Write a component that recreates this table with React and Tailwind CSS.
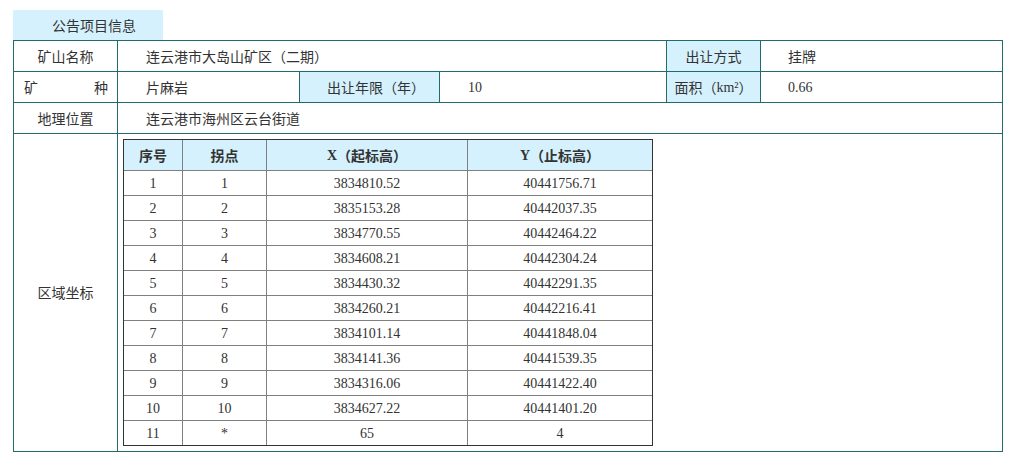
import React from 'react';

const cjk = { fontFamily: '"Noto Sans CJK SC", "Noto Sans", sans-serif' };
const num = { fontFamily: '"Liberation Serif", "Noto Sans CJK SC", serif' };

const points = [
  ['1', '1', '3834810.52', '40441756.71'],
  ['2', '2', '3835153.28', '40442037.35'],
  ['3', '3', '3834770.55', '40442464.22'],
  ['4', '4', '3834608.21', '40442304.24'],
  ['5', '5', '3834430.32', '40442291.35'],
  ['6', '6', '3834260.21', '40442216.41'],
  ['7', '7', '3834101.14', '40441848.04'],
  ['8', '8', '3834141.36', '40441539.35'],
  ['9', '9', '3834316.06', '40441422.40'],
  ['10', '10', '3834627.22', '40441401.20'],
  ['11', '*', '65', '4'],
];

const colW = ['w-[59px] border-r', 'w-[84px] border-r', 'w-[201px] border-r', 'w-[184px]'];

const CoordTable = () => (
  <div className="w-[530px] border border-[#333]">
    {/* header */}
    <div className="flex h-[31px] border-b border-[#808080] bg-[#d5f1fd] text-[14px] font-bold text-[#333]" style={cjk}>
      <div className={`${colW[0]} border-[#808080] flex items-center justify-center`}>序号</div>
      <div className={`${colW[1]} border-[#808080] flex items-center justify-center`}>拐点</div>
      <div className={`${colW[2]} border-[#808080] flex items-center justify-center`}>
        <span style={num}>X</span>（起标高）
      </div>
      <div className={`${colW[3]} border-[#808080] flex items-center justify-center`}>
        <span style={num}>Y</span>（止标高）
      </div>
    </div>
    {points.map((row, r) => (
      <div
        key={r}
        className={
          r < points.length - 1
            ? 'flex h-[25px] border-b border-[#808080] text-[14px] text-[#333]'
            : 'flex h-[24px] text-[14px] text-[#333]'
        }
        style={num}
      >
        {row.map((c, i) => (
          <div key={i} className={`${colW[i]} border-[#808080] flex items-center justify-center`}>
            {c}
          </div>
        ))}
      </div>
    ))}
  </div>
);

const App = () => {
  return (
    <div className="min-h-[462px] bg-white pl-[13px] pt-[10px] text-[14px] text-[#333]" style={cjk}>
      {/* tab */}
      <div className="w-[150px] h-[30px] bg-[#d5f1fd] flex items-center pl-[39px]">公告项目信息</div>

      <div className="w-[990px] border border-[#236b6b]">
        {/* row 1 */}
        <div className="flex h-[31px] border-b border-[#236b6b]">
          <div className="w-[104px] border-r border-[#236b6b] flex items-center justify-center">矿山名称</div>
          <div className="w-[549px] border-r border-[#236b6b] flex items-center pl-[28px]">连云港市大岛山矿区（二期）</div>
          <div className="w-[94px] border-r border-[#236b6b] bg-[#d5f1fd] flex items-center justify-center">出让方式</div>
          <div className="flex-1 flex items-center pl-[27px]">挂牌</div>
        </div>

        {/* row 2 */}
        <div className="flex h-[31px] border-b border-[#236b6b]">
          <div className="w-[104px] border-r border-[#236b6b] flex items-center justify-between pl-[10px] pr-[9px]">
            <span>矿</span>
            <span>种</span>
          </div>
          <div className="w-[182px] border-r border-[#236b6b] flex items-center pl-[28px]">片麻岩</div>
          <div className="w-[140px] border-r border-[#236b6b] bg-[#d5f1fd] flex items-center pl-[27px]">出让年限（年）</div>
          <div className="w-[227px] border-r border-[#236b6b] flex items-center pl-[28px]" style={num}>10</div>
          <div className="w-[94px] border-r border-[#236b6b] bg-[#d5f1fd] flex items-center justify-center">
            面积（<span style={num}>km²</span>）
          </div>
          <div className="flex-1 flex items-center pl-[27px]" style={num}>0.66</div>
        </div>

        {/* row 3 */}
        <div className="flex h-[31px] border-b border-[#236b6b]">
          <div className="w-[104px] border-r border-[#236b6b] flex items-center justify-center">地理位置</div>
          <div className="flex-1 flex items-center pl-[28px]">连云港市海州区云台街道</div>
        </div>

        {/* row 4 */}
        <div className="flex h-[317px]">
          <div className="w-[104px] border-r border-[#236b6b] flex items-center justify-center">区域坐标</div>
          <div className="flex-1 pl-[5px] pt-[5px]">
            <CoordTable />
          </div>
        </div>
      </div>
    </div>
  );
};

export default App;
